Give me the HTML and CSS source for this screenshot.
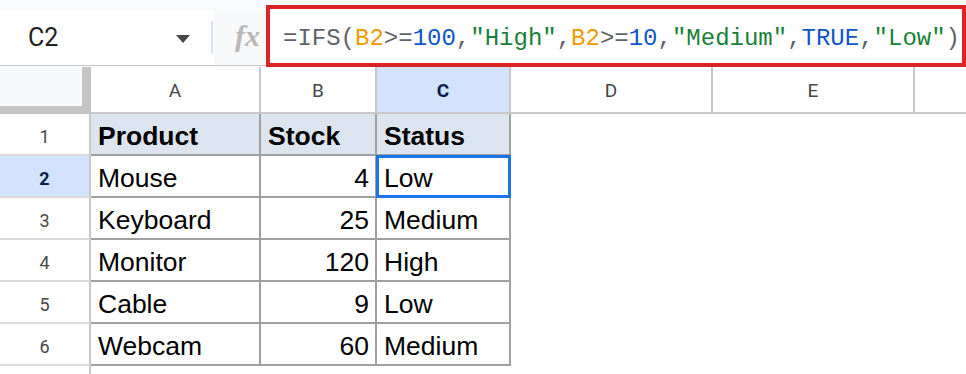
FILE: index.html
```html
<!DOCTYPE html>
<html lang="en">
<head>
  <meta charset="UTF-8" />
  <title>IFS formula</title>
  <link rel="stylesheet" href="styles.css">
</head>
<body>

<div class="toolbar">
  <div class="namebox">
    <span class="cellref">C2</span>
    <span class="caret"></span>
    <span class="divider"></span>
  </div>
  <div class="fx">fx</div>
  <div class="formula">
    <span class="op">=IFS(</span><span class="ref">B2</span><span class="op">&gt;=</span><span class="num">100</span><span class="op">,</span><span class="str">"High"</span><span class="op">,</span><span class="ref">B2</span><span class="op">&gt;=</span><span class="num">10</span><span class="op">,</span><span class="str">"Medium"</span><span class="op">,</span><span class="num">TRUE</span><span class="op">,</span><span class="str">"Low"</span><span class="op">)</span>
  </div>
</div>

<div class="sheet">
  <div class="corner"><div class="corner-inner"></div></div>
  <div class="colhead">A</div>
  <div class="colhead">B</div>
  <div class="colhead active">C</div>
  <div class="colhead">D</div>
  <div class="colhead">E</div>
  <div class="colhead last"></div>

  <div class="rowhead">1</div>
  <div class="cell head">Product</div>
  <div class="cell head">Stock</div>
  <div class="cell head">Status</div>
  <div class="blank"></div><div class="blank"></div><div class="blank"></div>

  <div class="rowhead active">2</div>
  <div class="cell">Mouse</div>
  <div class="cell right">4</div>
  <div class="cell selected">Low</div>
  <div class="blank"></div><div class="blank"></div><div class="blank"></div>

  <div class="rowhead">3</div>
  <div class="cell">Keyboard</div>
  <div class="cell right">25</div>
  <div class="cell">Medium</div>
  <div class="blank"></div><div class="blank"></div><div class="blank"></div>

  <div class="rowhead">4</div>
  <div class="cell">Monitor</div>
  <div class="cell right">120</div>
  <div class="cell">High</div>
  <div class="blank"></div><div class="blank"></div><div class="blank"></div>

  <div class="rowhead">5</div>
  <div class="cell">Cable</div>
  <div class="cell right">9</div>
  <div class="cell">Low</div>
  <div class="blank"></div><div class="blank"></div><div class="blank"></div>

  <div class="rowhead">6</div>
  <div class="cell">Webcam</div>
  <div class="cell right">60</div>
  <div class="cell">Medium</div>
  <div class="blank"></div><div class="blank"></div><div class="blank"></div>

  <div class="rowhead"></div>
</div>

</body>
</html>
```

FILE: styles.css
```css
body {
  margin: 0;
  width: 966px;
  height: 374px;
  overflow: hidden;
  background: #fff;
  font-family: "Liberation Sans", Arial, sans-serif;
  color: #000;
}

.toolbar {
  display: flex;
  height: 67px;
  background: #f8fafd;
}

.namebox {
  display: flex;
  flex: none;
  align-items: center;
  width: 214px;
  height: 56px;
  margin-top: 10px;
  box-sizing: border-box;
  border-bottom: 1px solid #c7c7c7;
  background: #fff;
  padding-left: 28px;
}

.cellref {
  font-family: Roboto, sans-serif;
  font-size: 25px;
  color: #1f1f1f;
  width: 148px;
}

.caret {
  width: 0;
  height: 0;
  border-left: 7px solid transparent;
  border-right: 7px solid transparent;
  border-top: 8px solid #444746;
  margin-top: 2px;
}

.divider {
  width: 2px;
  height: 33px;
  background: #d3e3fd;
  margin-left: auto;
  margin-right: 1px;
}

.fx {
  flex: none;
  width: 52px;
  height: 56px;
  margin-top: 10px;
  box-sizing: border-box;
  overflow: hidden;
  border-bottom: 1px solid #c7c7c7;
  background: #f8f9fa;
  font-family: "Liberation Serif", serif;
  font-style: italic;
  font-weight: bold;
  font-size: 30px;
  color: #b8b8b8;
  padding-left: 21px;
  line-height: 52px;
  white-space: nowrap;
}

.formula {
  flex: 1;
  margin-top: 5px;
  height: 62px;
  box-sizing: border-box;
  border: 4px solid #db2525;
  background: #fff;
  padding: 3px 0 0 13px;
  font-family: "Liberation Mono", monospace;
  font-size: 24px;
  line-height: 53px;
  white-space: nowrap;
  overflow: hidden;
}

.op { color: #5f6368; }
.ref { color: #f29900; }
.num { color: #1155cc; }
.str { color: #188038; }

.sheet {
  display: grid;
  grid-template-columns: 91px 170px 116px 134px 202px 202px 51px;
  grid-template-rows: 47px repeat(6, 42px) 20px;
}

.corner {
  background: #c4c4c4;
  border-right: 1px solid #c4c4c4;
}

.corner-inner {
  width: 82px;
  height: 39px;
  background: #f8f9fa;
}

.colhead {
  display: flex;
  align-items: center;
  justify-content: center;
  box-sizing: border-box;
  padding-top: 2px;
  border-right: 2px solid #c7c7c7;
  border-bottom: 2px solid #c7c7c7;
  font-family: Roboto, sans-serif;
  font-size: 19px;
  color: #444746;
}

.colhead.last {
  border-right: none;
}

.colhead.active {
  background: #d3e3fd;
  color: #041e49;
  font-weight: bold;
}

.rowhead {
  display: flex;
  align-items: center;
  justify-content: center;
  box-sizing: border-box;
  padding-top: 5px;
  border-right: 2px solid #c7c7c7;
  border-bottom: 2px solid #dadada;
  font-family: Roboto, sans-serif;
  font-size: 18px;
  color: #444746;
  grid-column: 1;
}

.rowhead.active {
  background: #d3e3fd;
  color: #041e49;
  font-weight: bold;
}

.cell {
  display: flex;
  align-items: center;
  box-sizing: border-box;
  padding: 5px 6px 0 7px;
  border-right: 2px solid #a0a0a0;
  border-bottom: 2px solid #a0a0a0;
  font-size: 26.5px;
  white-space: nowrap;
}

.cell.head {
  background: #dce5ef;
  font-weight: bold;
}

.cell.right {
  justify-content: flex-end;
}

.cell.selected {
  position: relative;
}

.cell.selected::after {
  content: "";
  position: absolute;
  top: -1px;
  left: -1px;
  right: -2px;
  bottom: -2px;
  border: 3px solid #1a73e8;
}
```
